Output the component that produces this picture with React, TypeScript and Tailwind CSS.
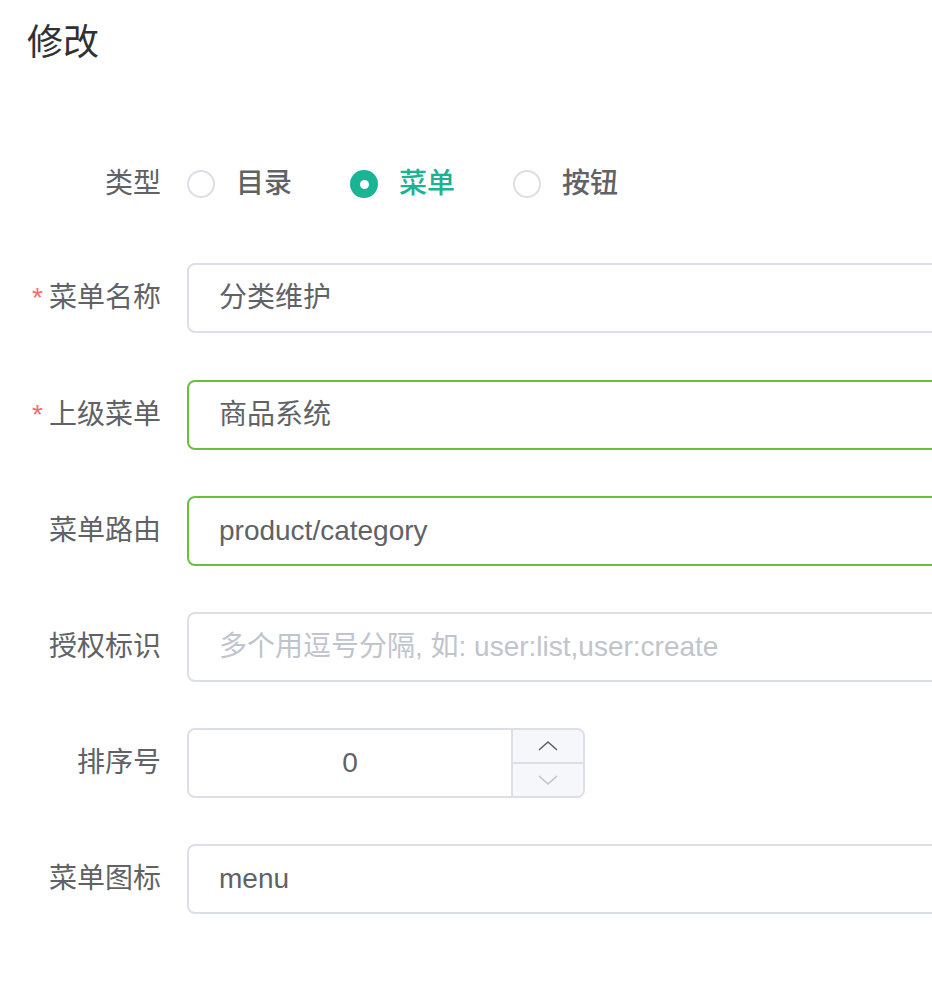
import React from "react";

const font = {
  fontFamily: '"Helvetica Neue", "Liberation Sans", "Noto Sans CJK SC", sans-serif',
};

const Label = ({ text, required }: { text: string; required?: boolean }) => (
  <div className="w-[187px] shrink-0 pr-[26px] text-right text-[28px] text-[#606266] leading-none">
    {required && <span className="mr-[6px] text-[#f56c6c]">*</span>}
    {text}
  </div>
);

const Input = ({
  value,
  placeholder,
  active,
}: {
  value?: string;
  placeholder?: string;
  active?: boolean;
}) => (
  <div
    className={`flex h-[70px] w-[900px] shrink-0 items-center rounded-[8px] border-2 bg-white px-[30px] text-[28px] ${
      active ? "border-[#67c23a]" : "border-[#dcdfe6]"
    }`}
  >
    {value ? (
      <span className="text-[#606266]">{value}</span>
    ) : (
      <span className="text-[#c0c4cc]">{placeholder}</span>
    )}
  </div>
);

const Radio = ({ text, checked }: { text: string; checked?: boolean }) => (
  <div className="flex items-center gap-[21px]">
    {checked ? (
      <span className="flex h-[28px] w-[28px] items-center justify-center rounded-full bg-[#1ab394]">
        <span className="h-[9px] w-[9px] rounded-full bg-white" />
      </span>
    ) : (
      <span className="h-[28px] w-[28px] rounded-full border-2 border-[#dcdfe6] bg-white" />
    )}
    <span
      className={`text-[28px] font-medium leading-none ${
        checked ? "text-[#1ab394]" : "text-[#606266]"
      }`}
    >
      {text}
    </span>
  </div>
);

export default function App() {
  return (
    <div className="h-[992px] w-[932px] overflow-hidden bg-white" style={font}>
      <h2 className="pl-[27px] pt-[22px] text-[36px] leading-[42px] text-[#303133]">修改</h2>

      <div className="mt-[85px] flex flex-col">
        {/* 类型 */}
        <div className="mb-[44px] flex h-[70px] items-center">
          <Label text="类型" />
          <div className="flex items-center gap-[58px]">
            <Radio text="目录" />
            <Radio text="菜单" checked />
            <Radio text="按钮" />
          </div>
        </div>

        <div className="mb-[47px] flex items-center">
          <Label text="菜单名称" required />
          <Input value="分类维护" />
        </div>

        <div className="mb-[46px] flex items-center">
          <Label text="上级菜单" required />
          <Input value="商品系统" active />
        </div>

        <div className="mb-[46px] flex items-center">
          <Label text="菜单路由" />
          <Input value="product/category" active />
        </div>

        <div className="mb-[46px] flex items-center">
          <Label text="授权标识" />
          <Input placeholder="多个用逗号分隔, 如: user:list,user:create" />
        </div>

        {/* 排序号 */}
        <div className="mb-[46px] flex items-center">
          <Label text="排序号" />
          <div className="flex h-[70px] w-[398px] overflow-hidden rounded-[8px] border-2 border-[#dcdfe6]">
            <div className="flex flex-1 items-center justify-center text-[28px] text-[#606266]">0</div>
            <div className="flex w-[72px] flex-col border-l-2 border-[#dcdfe6] bg-[#f5f7fa]">
              <div className="flex flex-1 items-center justify-center border-b-2 border-[#dcdfe6]">
                <svg width="22" height="12" viewBox="0 0 22 12" fill="none">
                  <polyline points="2,10 11,2 20,10" stroke="#606266" strokeWidth="1.6" />
                </svg>
              </div>
              <div className="flex flex-1 items-center justify-center">
                <svg width="22" height="12" viewBox="0 0 22 12" fill="none">
                  <polyline points="2,2 11,10 20,2" stroke="#c0c4cc" strokeWidth="1.6" />
                </svg>
              </div>
            </div>
          </div>
        </div>

        <div className="flex items-center">
          <Label text="菜单图标" />
          <Input value="menu" />
        </div>
      </div>
    </div>
  );
}
